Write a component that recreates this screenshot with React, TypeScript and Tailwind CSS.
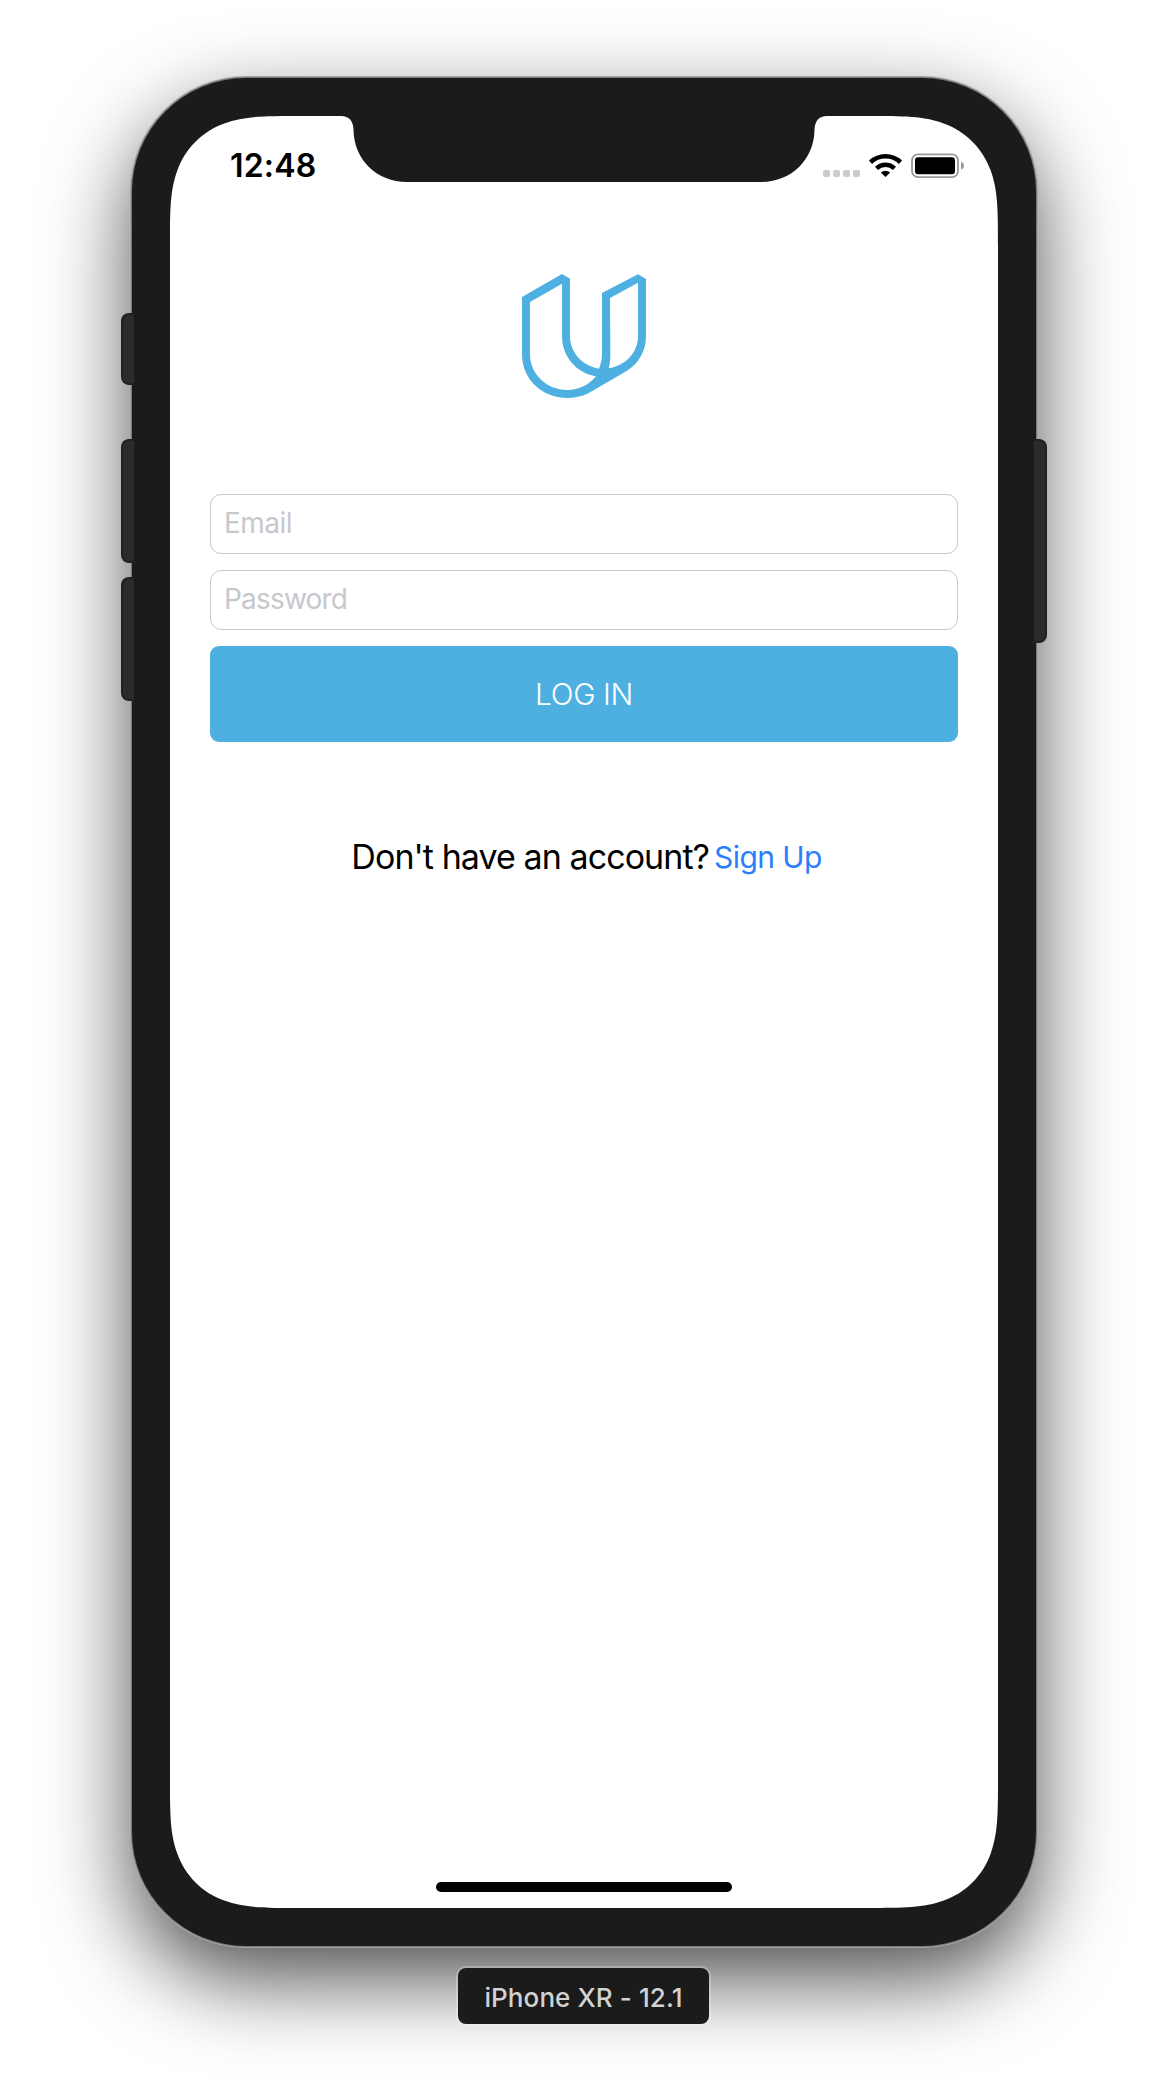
const SIDE = "absolute w-[13px] bg-[#2b2b2b] border-2 border-[#212121]";

function Logo() {
  return (
    <svg className="ml-[2px] h-[160px] w-[170px]" viewBox="0 0 510 480" fill="#4eb0e1" fillRule="evenodd" aria-label="Udacity">
      <path d="M66 126 186 57 210 71V244C210 291 245 332 297 341C303 325 306 312 306 298V114L414 58 438 72V244C438 288 415 328 380 348L265 415C245 425 222 429 201 429C125 429 66 372 66 298ZM90 141V298C90 358 140 405 202 405C235 405 265 392 288 364C230 355 186 305 186 244V86ZM330 129 331 298C331 312 330 326 326 340C378 332 414 292 414 244V83Z" />
    </svg>
  );
}

function StatusIcons() {
  return (
    <svg className="h-[30px] w-[150px]" viewBox="0 -4 150 30" fill="none">
      {[0, 10, 20, 30].map((x) => (
        <rect key={x} x={3 + x} y="16" width="7" height="7" rx="2" fill="#cbcbcb" />
      ))}
      <path d="M50.5 8.2A22 22 0 0 1 80.5 8.2" stroke="#000" strokeWidth="4.6" />
      <path d="M56.5 14.4A13 13 0 0 1 74.5 14.4" stroke="#000" strokeWidth="4.4" />
      <path d="M60.8 18.6A7.2 7.2 0 0 1 70.2 18.6L65.5 23Z" fill="#000" />
      <rect x="92" y="0.3" width="46" height="22.8" rx="6" stroke="#999" strokeWidth="1.8" />
      <rect x="95" y="3.2" width="40" height="17" rx="3" fill="#000" />
      <path d="M141 7.7C145 8.9 145 14.5 141 15.7Z" fill="#999" />
    </svg>
  );
}

export default function App() {
  return (
    <div className="flex h-[2096px] w-[1168px] flex-col items-center overflow-hidden bg-white pt-[78px] font-['Inter',sans-serif]">
      <div className="relative h-[1868px] w-[904px] shrink-0 rounded-[114px] bg-[#1b1b1b] p-[38px] shadow-[0_0_0_1px_#777,0_0_0_2px_#a5a5a5,0_33px_86px_rgba(0,0,0,0.7)]">
        <div className={`${SIDE} -left-[11px] top-[235px] h-[72px] rounded-l-lg border-r-0`} />
        <div className={`${SIDE} -left-[11px] top-[361px] h-[124px] rounded-l-lg border-r-0`} />
        <div className={`${SIDE} -left-[11px] top-[499px] h-[124px] rounded-l-lg border-r-0`} />
        <div className={`${SIDE} -right-[11px] top-[361px] h-[204px] rounded-r-lg border-l-0`} />

        <div className="flex h-[1792px] w-[828px] flex-col items-center bg-white [clip-path:path('M131.5_0H171Q183_0_183.5_14C184_44_207_66_237_66H591C621_66_644_44_644.5_14Q645_0_657_0H696.5C734.4_0_753.3_0_773.7_7.4C795.4_15_813_32.6_820.6_54.3C828_74.7_828_93.6_828_131.5V1660.5C828_1698.4_828_1717.3_820.6_1737.7C813_1759.4_795.4_1777_773.7_1784.6C753.3_1792_734.4_1792_696.5_1792H131.5C93.6_1792_74.7_1792_54.3_1784.6C32.6_1777_15_1759.4_7.4_1737.7C0_1717.3_0_1698.4_0_1660.5V131.5C0_93.6_0_74.7_7.4_54.3C15_32.6_32.6_15_54.3_7.4C74.7_0_93.6_0_131.5_0Z')]">
          <div className="flex h-[139px] w-full items-start justify-between pl-[60px] pr-[28px] pt-[34px]">
            <span className="-mt-px text-[32px] font-semibold leading-[34px] tracking-[0.2px]">12:48</span>
            <StatusIcons />
          </div>
          <Logo />
          <form className="mt-[79px] flex w-[748px] flex-col gap-4">
            <input placeholder="Email" className="h-[60px] rounded-[11px] border border-[#c9c9cc] px-[13px] pb-0.5 text-[28px] tracking-[-0.5px] placeholder:text-[#c7c7cd]" />
            <input placeholder="Password" className="h-[60px] rounded-[11px] border border-[#c9c9cc] px-[13px] pb-0.5 text-[28px] tracking-[-0.8px] placeholder:text-[#c7c7cd]" />
            <button type="button" className="h-24 rounded-[9px] bg-[#4eb0e1] pt-px text-[30px] font-light tracking-[-0.4px] text-white">LOG IN</button>
          </form>
          <div className="mt-[90px] flex items-center gap-[5px] pl-[5px] leading-[50px] whitespace-nowrap">
            <span className="text-[34px] tracking-[-0.93px]">Don't have an account?</span>
            <a className="text-[30px] tracking-[-0.6px] text-[#2d7ff9]">Sign Up</a>
          </div>
          <div className="mt-auto mb-4 h-2.5 w-[296px] rounded-full bg-black" />
        </div>
      </div>
      <div className="z-10 mr-px mt-[22px] flex h-14 w-[251px] shrink-0 items-center justify-center rounded-lg bg-[#1b1b1b] pt-0.5 text-[26px] font-medium tracking-[0.1px] text-[#d2d2d2] shadow-[0_0_0_2px_rgba(255,255,255,0.25)]">
        iPhone XR - 12.1
      </div>
    </div>
  );
}
